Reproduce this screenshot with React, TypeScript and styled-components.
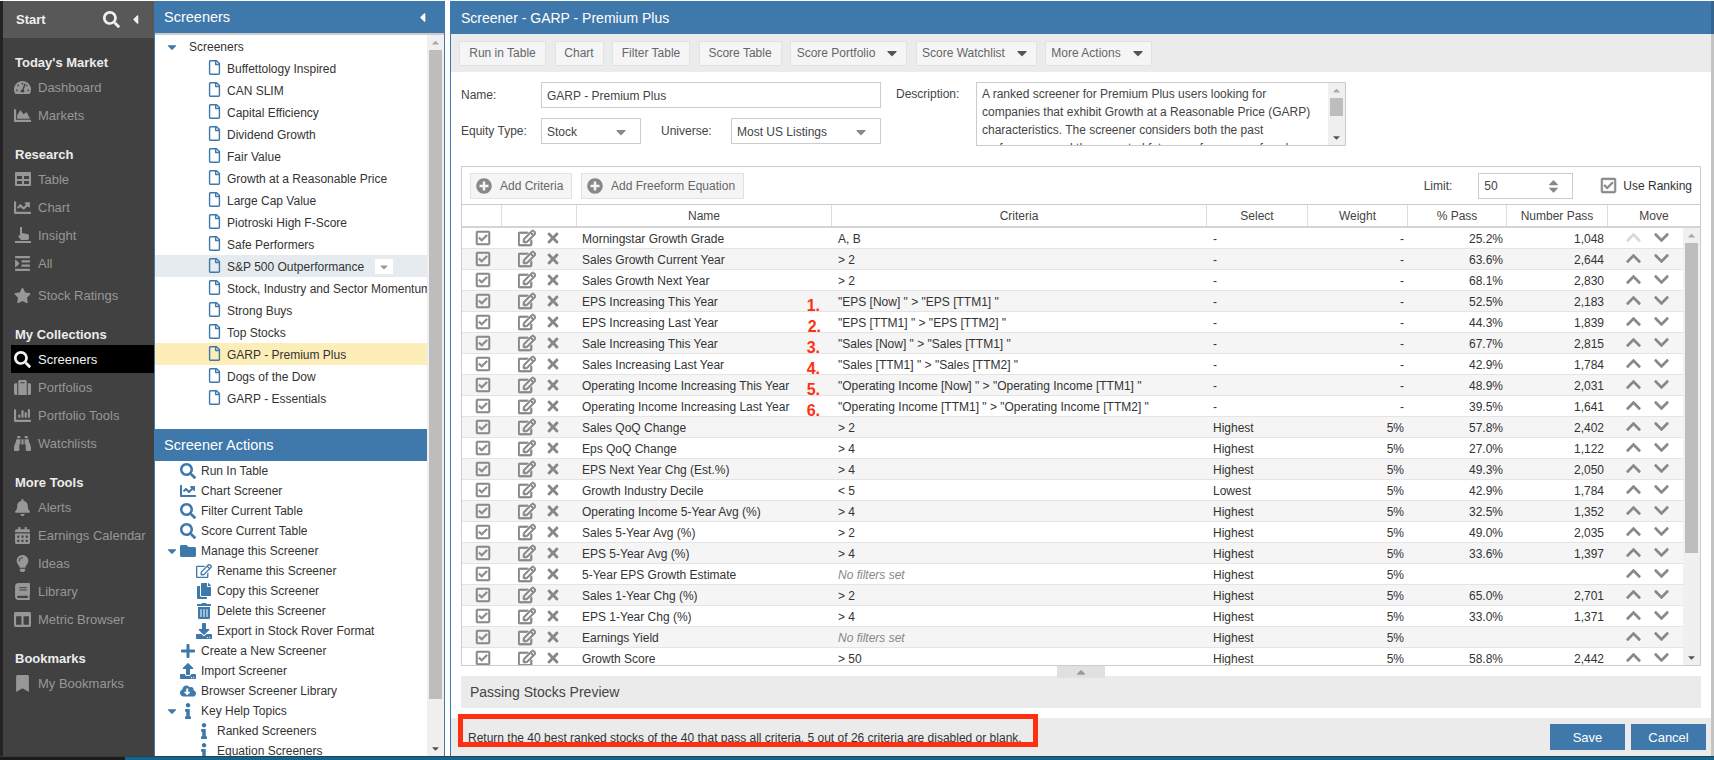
import styled, { createGlobalStyle } from "styled-components"
import type { ReactNode } from "react"
import {
    FaBell, FaBinoculars, FaBook, FaBookmark, FaCalendarAlt, FaCaretDown, FaCaretLeft, FaCaretUp,
    FaChartArea, FaChartBar, FaChartLine, FaChevronDown, FaChevronUp, FaCloudDownloadAlt, FaColumns,
    FaCopy, FaDownload, FaFolder, FaIndent, FaInfo, FaLightbulb, FaPlus, FaPlusCircle, FaRegCheckSquare,
    FaRegEdit, FaRegFile, FaSearch, FaStar, FaSuitcase, FaTachometerAlt, FaTimes, FaTrashAlt, FaUpload,
} from "react-icons/fa"

const BLUE = "#3f78ab"
const COLUMNS = "40px 75px 255px 375px 101px 100px 99px 101px"

const GlobalStyle = createGlobalStyle`
    html, body { margin: 0; padding: 0; background: #fff; }
    body { font-family: "Liberation Sans", Arial, sans-serif; font-size: 12px; color: #333; }
    * { box-sizing: border-box; }
`

const Page = styled.div`
    width: 1714px;
    height: 760px;
    overflow: hidden;
    display: flex;
    flex-direction: column;
    padding-top: 1px;
`
const Columns = styled.div`
    flex: 1;
    min-height: 0;
    display: flex;
`
const BottomStrip = styled.div`
    height: 4px;
    border-top: 1px solid #3a3a3a;
    background: linear-gradient(90deg, #1c1c1c 125px, #0b6795 125px);
`
const RightEdge = styled.div`
    width: 3px;
    background: linear-gradient(#35648d 33px, #c4c4c4 33px);
`

/* left nav */
const Nav = styled.nav`
    width: 154px;
    flex: none;
    background: #414141;
    border-left: 3px solid #232323;
    color: #979797;
    font-size: 13px;
`
const StartBar = styled.div`
    height: 37px;
    background: #585858;
    display: flex;
    align-items: center;
    padding: 0 11px 0 13px;
    color: #f0f0f0;
    font-weight: bold;
    font-size: 13px;
`
const StartLabel = styled.span`
    flex: 1;
`
const NavBody = styled.div`
    padding-top: 14px;
`
const NavGroup = styled.div`
    margin-bottom: 15px;
`
const NavHeader = styled.div`
    height: 21px;
    line-height: 22px;
    padding-left: 12px;
    color: #ececec;
    font-weight: bold;
    font-size: 13px;
`
const NavItem = styled.div<{ $active?: boolean; $gap?: boolean }>`
    height: 28px;
    display: flex;
    align-items: center;
    margin-top: ${p => (p.$gap ? "4px" : "0")};
    margin-left: ${p => (p.$active ? "8px" : "0")};
    padding-left: ${p => (p.$active ? "3px" : "11px")};
    background: ${p => (p.$active ? "#000" : "transparent")};
    color: ${p => (p.$active ? "#f2f2f2" : "#979797")};
`
const NavIcon = styled.span`
    width: 17px;
    margin-right: 7px;
    display: flex;
    justify-content: center;
    font-size: 17px;
`

/* screeners panel */
const SidePanel = styled.aside`
    width: 291px;
    flex: none;
    display: flex;
    flex-direction: column;
    border-right: 1px solid ${BLUE};
    border-left: 1px solid ${BLUE};
`
const PanelTitle = styled.div`
    height: 32px;
    flex: none;
    background: ${BLUE};
    color: #fff;
    font-size: 14.5px;
    display: flex;
    align-items: center;
    justify-content: space-between;
    padding: 0 14px 0 9px;
`
const PanelBody = styled.div`
    flex: 1;
    min-height: 0;
    display: flex;
    border-top: 2px solid #ccc;
`
const PanelContent = styled.div`
    flex: 1;
    min-width: 0;
    overflow: hidden;
    display: flex;
    flex-direction: column;
`
const Tree = styled.div`
    height: 394px;
    flex: none;
`
const TreeRow = styled.div<{ $hover?: boolean; $selected?: boolean; $root?: boolean }>`
    height: 22px;
    display: flex;
    align-items: center;
    white-space: nowrap;
    overflow: hidden;
    padding: 1px 0 0 ${p => (p.$root ? "10px" : "52px")};
    background: ${p => (p.$selected ? "#fdedb9" : p.$hover ? "#e6ebef" : "transparent")};
`
const RootCaret = styled.span`
    width: 24px;
    flex: none;
    color: ${BLUE};
    font-size: 14px;
    display: flex;
`
const DocIcon = styled.span`
    width: 20px;
    flex: none;
    color: ${BLUE};
    font-size: 15px;
    display: flex;
    margin-top: -2px;
`
const RowMenu = styled.span`
    width: 18px;
    height: 15px;
    margin-left: 11px;
    background: #fff;
    color: #999;
    font-size: 12px;
    display: flex;
    align-items: center;
    justify-content: center;
`
const ActionsTitle = styled(PanelTitle)`
    height: 32px;
`
const ActionRow = styled.div<{ $level: number }>`
    height: 20px;
    flex: none;
    display: flex;
    align-items: center;
    white-space: nowrap;
    padding-left: ${p => (p.$level === 2 ? "26px" : "10px")};
`
const ActionCaret = styled.span`
    width: 14px;
    flex: none;
    color: ${BLUE};
    font-size: 14px;
    display: flex;
`
const ActionIcon = styled.span`
    width: 17px;
    height: 16px;
    flex: none;
    margin-right: 5px;
    color: ${BLUE};
    font-size: 16px;
    display: flex;
    align-items: center;
    justify-content: center;
`
const ScrollTrack = styled.div<{ $width?: number }>`
    width: ${p => p.$width ?? 17}px;
    flex: none;
    background: #f0f0f0;
    display: flex;
    flex-direction: column;
    align-items: center;
    color: #777;
    font-size: 11px;
`
const ScrollArrow = styled.span<{ $light?: boolean }>`
    height: 15px;
    flex: none;
    display: flex;
    align-items: center;
    color: ${p => (p.$light ? "#aaa" : "#555")};
`
const ScrollThumb = styled.div<{ $height: number }>`
    width: calc(100% - 4px);
    height: ${p => p.$height}px;
    flex: none;
    background: #bdbdbd;
`
const ScrollSpace = styled.div`
    flex: 1;
`
const Gap = styled.div`
    width: 5px;
    flex: none;
`

/* main dialog */
const Main = styled.main`
    flex: 1;
    min-width: 0;
    display: flex;
    flex-direction: column;
    border-left: 1px solid ${BLUE};
    position: relative;
`
const MainTitle = styled.div`
    height: 33px;
    flex: none;
    background: ${BLUE};
    color: #fff;
    font-size: 14px;
    display: flex;
    align-items: center;
    padding-left: 10px;
`
const Toolbar = styled.div`
    height: 38px;
    flex: none;
    background: #ebebeb;
    display: flex;
    align-items: center;
    gap: 8.5px;
    padding: 0 0 0 8px;
`
const ToolButton = styled.div<{ $width: number }>`
    width: ${p => p.$width}px;
    height: 25px;
    background: #f5f5f5;
    border: 1px solid #e2e2e2;
    color: #666;
    display: flex;
    align-items: center;
    justify-content: center;
    gap: 9px;
    svg { color: #555; font-size: 16px; }
`
const Form = styled.div`
    display: flex;
    padding: 10px 0 20px 10px;
    flex: none;
`
const FormLeft = styled.div`
    width: 420px;
    display: flex;
    flex-direction: column;
    gap: 10px;
`
const FormRow = styled.div`
    display: flex;
    align-items: center;
`
const Label = styled.span<{ $width: number; $indent?: number }>`
    width: ${p => p.$width}px;
    margin-left: ${p => p.$indent ?? 0}px;
    flex: none;
    color: #444;
`
const Field = styled.div<{ $width: number }>`
    width: ${p => p.$width}px;
    height: 26px;
    flex: none;
    border: 1px solid #ccc;
    display: flex;
    align-items: center;
    justify-content: space-between;
    padding: 1px 11px 0 5px;
    color: #444;
    svg { color: #888; font-size: 16px; }
`
const DescriptionLabel = styled(Label)`
    align-self: flex-start;
    line-height: 24px;
`
const Description = styled.div`
    width: 370px;
    height: 64px;
    border: 1px solid #ccc;
    display: flex;
    overflow: hidden;
`
const DescriptionText = styled.div`
    flex: 1;
    padding: 2px 8px 0 5px;
    line-height: 18px;
    color: #444;
`

const Criteria = styled.section`
    margin: 0 10px;
    height: 500px;
    flex: none;
    border: 1px solid #ccc;
    display: flex;
    flex-direction: column;
`
const CriteriaBar = styled.div`
    height: 38px;
    flex: none;
    display: flex;
    align-items: center;
    padding: 0 8px;
    border-bottom: 1px solid #ccc;
`
const AddButton = styled.div<{ $width: number }>`
    width: ${p => p.$width}px;
    height: 26px;
    margin-right: 9px;
    background: #f5f5f5;
    border: 1px solid #e2e2e2;
    color: #666;
    display: flex;
    align-items: center;
    padding-left: 5px;
    gap: 8px;
    svg { color: #888; font-size: 16px; }
`
const BarSpace = styled.div`
    flex: 1;
`
const LimitLabel = styled.span`
    margin-right: 26px;
    color: #444;
`
const Spinner = styled.span`
    display: flex;
    flex-direction: column;
    svg { font-size: 15px; margin: -4px 0; }
`
const RankingCheck = styled.span`
    margin: 0 6px 0 27px;
    display: flex;
    color: #888;
    font-size: 17px;
    svg { stroke: currentColor; stroke-width: 18; }
`
const HeadRow = styled.div`
    height: 23px;
    flex: none;
    display: grid;
    grid-template-columns: ${COLUMNS} 1fr;
    border-bottom: 2px solid #d4d4d4;
`
const HeadCell = styled.div`
    display: flex;
    align-items: center;
    justify-content: center;
    color: #444;
    border-right: 1px solid #ddd;
    &:last-child { border-right: 0; }
`
const BodyWrap = styled.div`
    flex: 1;
    min-height: 0;
    display: flex;
`
const RowList = styled.div`
    flex: 1;
    min-width: 0;
    overflow: hidden;
`
const Row = styled.div`
    height: 21px;
    display: grid;
    grid-template-columns: ${COLUMNS} 1fr;
    align-items: center;
    padding-top: 1px;
    border-bottom: 1px solid #e4e4e4;
    &:nth-child(even) { background: #f5f5f5; }
`
const CheckCell = styled.span`
    display: flex;
    justify-content: center;
    color: #8a8a8a;
    font-size: 16px;
    margin: -2px 0 0 2px;
    svg { stroke: currentColor; stroke-width: 18; }
`
const EditCell = styled.span`
    display: flex;
    align-items: center;
    margin-top: -2px;
    padding-left: 16px;
    gap: 9px;
    color: #888;
    svg:first-child { font-size: 18px; stroke: currentColor; stroke-width: 24; }
    svg:last-child { font-size: 16px; }
`
const NameCell = styled.span`
    position: relative;
    padding-left: 5px;
    white-space: nowrap;
`
const CriteriaCell = styled.span<{ $empty?: boolean }>`
    padding-left: 6px;
    white-space: nowrap;
    overflow: hidden;
    color: ${p => (p.$empty ? "#888" : "#333")};
    font-style: ${p => (p.$empty ? "italic" : "normal")};
`
const TextCell = styled.span`
    padding-left: 6px;
`
const NumCell = styled.span`
    text-align: right;
    padding-right: 4px;
`
const MoveCell = styled.span<{ $topRow?: boolean }>`
    display: flex;
    align-items: center;
    gap: 11px;
    margin-top: -2px;
    padding-left: 17px;
    color: #888;
    font-size: 17px;
    svg:first-child { color: ${p => (p.$topRow ? "#d8d8d8" : "#888")}; }
`
const Marker = styled.b`
    position: absolute;
    top: -1px;
    color: #ff2f0f;
    font-size: 16px;
    line-height: 24px;
`
const Sash = styled.div`
    align-self: center;
    width: 48px;
    height: 12px;
    margin-bottom: -2px;
    z-index: 1;
    background: #e0e0e0;
    color: #999;
    font-size: 14px;
    display: flex;
    align-items: center;
    justify-content: center;
`
const Preview = styled.div`
    height: 32px;
    flex: none;
    margin: 0 10px;
    background: #ebebeb;
    display: flex;
    align-items: center;
    padding-left: 9px;
    font-size: 14px;
    color: #444;
`
const Footer = styled.footer`
    margin-top: 10px;
    flex: 1;
    background: #ebebeb;
    display: flex;
    align-items: center;
    gap: 6px;
    padding: 0 5px 0 17px;
    position: relative;
`
const Summary = styled.span`
    flex: 1;
    padding-top: 1px;
`
const RedBox = styled.div`
    position: absolute;
    left: 7px;
    top: -4px;
    width: 580px;
    height: 33px;
    border: 5px solid #ff2f0f;
`
const SubmitButton = styled.div`
    width: 75px;
    height: 26px;
    background: ${BLUE};
    color: #fff;
    font-size: 13px;
    display: flex;
    align-items: center;
    justify-content: center;
`

function GridIcon() {
    return (
        <svg width="16" height="14" viewBox="0 0 16 14" fill="currentColor" fillRule="evenodd">
            <path d="M1 0h14a1 1 0 0 1 1 1v12a1 1 0 0 1-1 1H1a1 1 0 0 1-1-1V1a1 1 0 0 1 1-1zM2 4v3h5V4zm7 0v3h5V4zM2 9v3h5V9zm7 0v3h5V9z" />
        </svg>
    )
}

function InsightIcon() {
    return (
        <svg width="16" height="16" viewBox="0 0 16 16" fill="currentColor">
            <path d="M5 0h2v6l5 1a2 2 0 0 1 2 2v2a2 2 0 0 1-2 2H6L3 9l2-1z" />
            <path d="M0 14h16v2H0z" />
        </svg>
    )
}

const navGroups: { title: string; items: { label: string; icon: ReactNode; active?: boolean; gap?: boolean }[] }[] = [
    { title: "Today's Market", items: [
        { label: "Dashboard", icon: <FaTachometerAlt /> },
        { label: "Markets", icon: <FaChartArea /> },
    ] },
    { title: "Research", items: [
        { label: "Table", icon: <GridIcon /> },
        { label: "Chart", icon: <FaChartLine /> },
        { label: "Insight", icon: <InsightIcon /> },
        { label: "All", icon: <FaIndent /> },
        { label: "Stock Ratings", icon: <FaStar />, gap: true },
    ] },
    { title: "My Collections", items: [
        { label: "Screeners", icon: <FaSearch />, active: true },
        { label: "Portfolios", icon: <FaSuitcase /> },
        { label: "Portfolio Tools", icon: <FaChartBar /> },
        { label: "Watchlists", icon: <FaBinoculars /> },
    ] },
    { title: "More Tools", items: [
        { label: "Alerts", icon: <FaBell /> },
        { label: "Earnings Calendar", icon: <FaCalendarAlt /> },
        { label: "Ideas", icon: <FaLightbulb /> },
        { label: "Library", icon: <FaBook /> },
        { label: "Metric Browser", icon: <FaColumns /> },
    ] },
    { title: "Bookmarks", items: [{ label: "My Bookmarks", icon: <FaBookmark /> }] },
]

const screeners = [
    "Buffettology Inspired", "CAN SLIM", "Capital Efficiency", "Dividend Growth", "Fair Value",
    "Growth at a Reasonable Price", "Large Cap Value", "Piotroski High F-Score", "Safe Performers",
    "S&P 500 Outperformance", "Stock, Industry and Sector Momentum", "Strong Buys", "Top Stocks",
    "GARP - Premium Plus", "Dogs of the Dow", "GARP - Essentials",
]

const actions: { label: string; icon: ReactNode; level: number; caret?: boolean }[] = [
    { label: "Run In Table", icon: <FaSearch />, level: 1 },
    { label: "Chart Screener", icon: <FaChartLine />, level: 1 },
    { label: "Filter Current Table", icon: <FaSearch />, level: 1 },
    { label: "Score Current Table", icon: <FaSearch />, level: 1 },
    { label: "Manage this Screener", icon: <FaFolder />, level: 1, caret: true },
    { label: "Rename this Screener", icon: <FaRegEdit />, level: 2 },
    { label: "Copy this Screener", icon: <FaCopy />, level: 2 },
    { label: "Delete this Screener", icon: <FaTrashAlt />, level: 2 },
    { label: "Export in Stock Rover Format", icon: <FaDownload />, level: 2 },
    { label: "Create a New Screener", icon: <FaPlus />, level: 1 },
    { label: "Import Screener", icon: <FaUpload />, level: 1 },
    { label: "Browser Screener Library", icon: <FaCloudDownloadAlt />, level: 1 },
    { label: "Key Help Topics", icon: <FaInfo />, level: 1, caret: true },
    { label: "Ranked Screeners", icon: <FaInfo />, level: 2 },
    { label: "Equation Screeners", icon: <FaInfo />, level: 2 },
]

type Criterion = {
    name: string
    filter: string
    select: string
    weight: string
    pass: string
    count: string
    marker?: string
    markerRight?: number
}

const criteria: Criterion[] = [
    { name: "Morningstar Growth Grade", filter: "A, B", select: "-", weight: "-", pass: "25.2%", count: "1,048" },
    { name: "Sales Growth Current Year", filter: "> 2", select: "-", weight: "-", pass: "63.6%", count: "2,644" },
    { name: "Sales Growth Next Year", filter: "> 2", select: "-", weight: "-", pass: "68.1%", count: "2,830" },
    { name: "EPS Increasing This Year", filter: '"EPS [Now] " > "EPS [TTM1] "', select: "-", weight: "-", pass: "52.5%", count: "2,183", marker: "1.", markerRight: 12 },
    { name: "EPS Increasing Last Year", filter: '"EPS [TTM1] " > "EPS [TTM2] "', select: "-", weight: "-", pass: "44.3%", count: "1,839", marker: "2.", markerRight: 11 },
    { name: "Sale Increasing This Year", filter: '"Sales [Now] " > "Sales [TTM1] "', select: "-", weight: "-", pass: "67.7%", count: "2,815", marker: "3.", markerRight: 12 },
    { name: "Sales Increasing Last Year", filter: '"Sales [TTM1] " > "Sales [TTM2] "', select: "-", weight: "-", pass: "42.9%", count: "1,784", marker: "4.", markerRight: 12 },
    { name: "Operating Income Increasing This Year", filter: '"Operating Income [Now] " > "Operating Income [TTM1] "', select: "-", weight: "-", pass: "48.9%", count: "2,031", marker: "5.", markerRight: 12 },
    { name: "Operating Income Increasing Last Year", filter: '"Operating Income [TTM1] " > "Operating Income [TTM2] "', select: "-", weight: "-", pass: "39.5%", count: "1,641", marker: "6.", markerRight: 12 },
    { name: "Sales QoQ Change", filter: "> 2", select: "Highest", weight: "5%", pass: "57.8%", count: "2,402" },
    { name: "Eps QoQ Change", filter: "> 4", select: "Highest", weight: "5%", pass: "27.0%", count: "1,122" },
    { name: "EPS Next Year Chg (Est.%)", filter: "> 4", select: "Highest", weight: "5%", pass: "49.3%", count: "2,050" },
    { name: "Growth Industry Decile", filter: "< 5", select: "Lowest", weight: "5%", pass: "42.9%", count: "1,784" },
    { name: "Operating Income 5-Year Avg (%)", filter: "> 4", select: "Highest", weight: "5%", pass: "32.5%", count: "1,352" },
    { name: "Sales 5-Year Avg (%)", filter: "> 2", select: "Highest", weight: "5%", pass: "49.0%", count: "2,035" },
    { name: "EPS 5-Year Avg (%)", filter: "> 4", select: "Highest", weight: "5%", pass: "33.6%", count: "1,397" },
    { name: "5-Year EPS Growth Estimate", filter: "", select: "Highest", weight: "5%", pass: "", count: "" },
    { name: "Sales 1-Year Chg (%)", filter: "> 2", select: "Highest", weight: "5%", pass: "65.0%", count: "2,701" },
    { name: "EPS 1-Year Chg (%)", filter: "> 4", select: "Highest", weight: "5%", pass: "33.0%", count: "1,371" },
    { name: "Earnings Yield", filter: "", select: "Highest", weight: "5%", pass: "", count: "" },
    { name: "Growth Score", filter: "> 50", select: "Highest", weight: "5%", pass: "58.8%", count: "2,442" },
]

const headers = ["", "", "Name", "Criteria", "Select", "Weight", "% Pass", "Number Pass", "Move"]

function App(): JSX.Element {
    return (
        <Page>
            <GlobalStyle />
            <Columns>
                <Nav>
                    <StartBar>
                        <StartLabel>Start</StartLabel>
                        <FaSearch size={17} />
                        <FaCaretLeft size={15} style={{ marginLeft: 8 }} />
                    </StartBar>
                    <NavBody>
                        {navGroups.map(group => (
                            <NavGroup key={group.title}>
                                <NavHeader>{group.title}</NavHeader>
                                {group.items.map(item => (
                                    <NavItem key={item.label} $active={item.active} $gap={item.gap}>
                                        <NavIcon>{item.icon}</NavIcon>
                                        {item.label}
                                    </NavItem>
                                ))}
                            </NavGroup>
                        ))}
                    </NavBody>
                </Nav>

                <SidePanel>
                    <PanelTitle>Screeners <FaCaretLeft size={15} /></PanelTitle>
                    <PanelBody>
                        <PanelContent>
                            <Tree>
                                <TreeRow $root><RootCaret><FaCaretDown /></RootCaret>Screeners</TreeRow>
                                {screeners.map(name => (
                                    <TreeRow key={name} $hover={name.startsWith("S&P")} $selected={name === "GARP - Premium Plus"}>
                                        <DocIcon><FaRegFile /></DocIcon>
                                        {name}
                                        {name.startsWith("S&P") && <RowMenu><FaCaretDown /></RowMenu>}
                                    </TreeRow>
                                ))}
                            </Tree>
                            <ActionsTitle>Screener Actions</ActionsTitle>
                            {actions.map(action => (
                                <ActionRow key={action.label} $level={action.level}>
                                    <ActionCaret>{action.caret && <FaCaretDown />}</ActionCaret>
                                    <ActionIcon>{action.icon}</ActionIcon>
                                    {action.label}
                                </ActionRow>
                            ))}
                        </PanelContent>
                        <ScrollTrack>
                            <ScrollArrow $light><FaCaretUp /></ScrollArrow>
                            <ScrollThumb $height={649} />
                            <ScrollSpace />
                            <ScrollArrow><FaCaretDown /></ScrollArrow>
                        </ScrollTrack>
                    </PanelBody>
                </SidePanel>
                <Gap />

                <Main>
                    <MainTitle>Screener - GARP - Premium Plus</MainTitle>
                    <Toolbar>
                        <ToolButton $width={87}>Run in Table</ToolButton>
                        <ToolButton $width={49}>Chart</ToolButton>
                        <ToolButton $width={78}>Filter Table</ToolButton>
                        <ToolButton $width={83}>Score Table</ToolButton>
                        <ToolButton $width={117}>Score Portfolio <FaCaretDown /></ToolButton>
                        <ToolButton $width={121}>Score Watchlist <FaCaretDown /></ToolButton>
                        <ToolButton $width={107}>More Actions <FaCaretDown /></ToolButton>
                    </Toolbar>
                    <Form>
                        <FormLeft>
                            <FormRow>
                                <Label $width={80}>Name:</Label>
                                <Field $width={340}>GARP - Premium Plus</Field>
                            </FormRow>
                            <FormRow>
                                <Label $width={80}>Equity Type:</Label>
                                <Field $width={100}>Stock <FaCaretDown /></Field>
                                <Label $width={70} $indent={20}>Universe:</Label>
                                <Field $width={150}>Most US Listings <FaCaretDown /></Field>
                            </FormRow>
                        </FormLeft>
                        <DescriptionLabel $width={80} $indent={15}>Description:</DescriptionLabel>
                        <Description>
                            <DescriptionText>
                                A ranked screener for Premium Plus users looking for companies that exhibit Growth at a Reasonable Price (GARP) characteristics. The screener considers both the past performance and the expected future performance of each company.
                            </DescriptionText>
                            <ScrollTrack $width={17}>
                                <ScrollArrow $light><FaCaretUp /></ScrollArrow>
                                <ScrollThumb $height={18} />
                                <ScrollSpace />
                                <ScrollArrow><FaCaretDown /></ScrollArrow>
                            </ScrollTrack>
                        </Description>
                    </Form>

                    <Criteria>
                        <CriteriaBar>
                            <AddButton $width={102}><FaPlusCircle /> Add Criteria</AddButton>
                            <AddButton $width={163}><FaPlusCircle /> Add Freeform Equation</AddButton>
                            <BarSpace />
                            <LimitLabel>Limit:</LimitLabel>
                            <Field $width={95}>50 <Spinner><FaCaretUp /><FaCaretDown /></Spinner></Field>
                            <RankingCheck><FaRegCheckSquare /></RankingCheck>
                            Use Ranking
                        </CriteriaBar>
                        <HeadRow>
                            {headers.map((title, i) => <HeadCell key={i}>{title}</HeadCell>)}
                        </HeadRow>
                        <BodyWrap>
                            <RowList>
                                {criteria.map((row, i) => (
                                    <Row key={row.name}>
                                        <CheckCell><FaRegCheckSquare /></CheckCell>
                                        <EditCell><FaRegEdit /><FaTimes /></EditCell>
                                        <NameCell>
                                            {row.name}
                                            {row.marker && <Marker style={{ right: row.markerRight }}>{row.marker}</Marker>}
                                        </NameCell>
                                        <CriteriaCell $empty={!row.filter}>{row.filter || "No filters set"}</CriteriaCell>
                                        <TextCell>{row.select}</TextCell>
                                        <NumCell>{row.weight}</NumCell>
                                        <NumCell>{row.pass}</NumCell>
                                        <NumCell>{row.count}</NumCell>
                                        <MoveCell $topRow={i === 0}><FaChevronUp /><FaChevronDown /></MoveCell>
                                    </Row>
                                ))}
                            </RowList>
                            <ScrollTrack>
                                <ScrollArrow $light><FaCaretUp /></ScrollArrow>
                                <ScrollThumb $height={310} />
                                <ScrollSpace />
                                <ScrollArrow><FaCaretDown /></ScrollArrow>
                            </ScrollTrack>
                        </BodyWrap>
                    </Criteria>

                    <Sash><FaCaretUp /></Sash>
                    <Preview>Passing Stocks Preview</Preview>
                    <Footer>
                        <RedBox />
                        <Summary>Return the 40 best ranked stocks of the 40 that pass all criteria. 5 out of 26 criteria are disabled or blank.</Summary>
                        <SubmitButton>Save</SubmitButton>
                        <SubmitButton>Cancel</SubmitButton>
                    </Footer>
                </Main>
                <RightEdge />
            </Columns>
            <BottomStrip />
        </Page>
    )
}

export default App
